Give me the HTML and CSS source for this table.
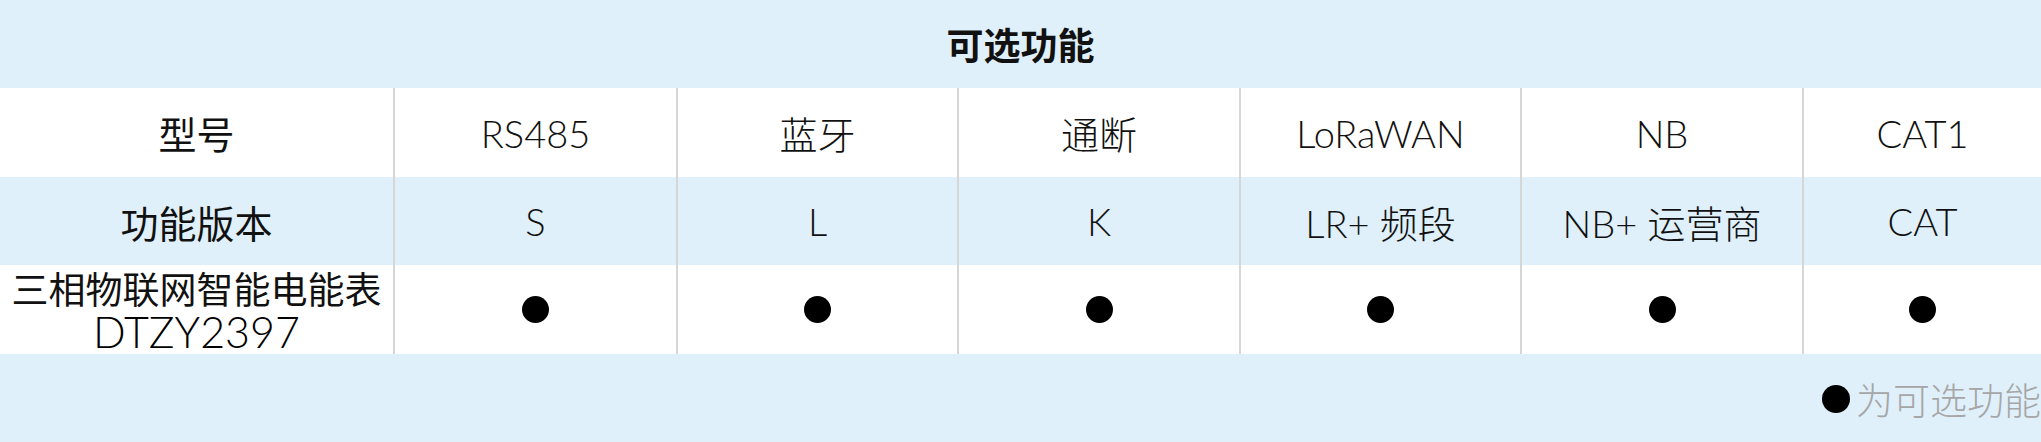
FILE: index.html
```html
<!DOCTYPE html>
<html lang="zh-CN">
<head>
<meta charset="utf-8">
<title>可选功能</title>
<link rel="stylesheet" href="styles.css">
</head>
<body>
<div class="table">
  <div class="title">可选功能</div>

  <div class="row white">
    <div class="cell first">型号</div>
    <div class="cell">RS485</div>
    <div class="cell">蓝牙</div>
    <div class="cell">通断</div>
    <div class="cell">LoRaWAN</div>
    <div class="cell">NB</div>
    <div class="cell">CAT1</div>
  </div>

  <div class="row blue">
    <div class="cell first">功能版本</div>
    <div class="cell">S</div>
    <div class="cell">L</div>
    <div class="cell">K</div>
    <div class="cell">LR+ 频段</div>
    <div class="cell">NB+ 运营商</div>
    <div class="cell">CAT</div>
  </div>

  <div class="row white">
    <div class="cell first model"><span class="name">三相物联网智能电能表</span><span class="code">DTZY2397</span></div>
    <div class="cell"><span class="dot"></span></div>
    <div class="cell"><span class="dot"></span></div>
    <div class="cell"><span class="dot"></span></div>
    <div class="cell"><span class="dot"></span></div>
    <div class="cell"><span class="dot"></span></div>
    <div class="cell"><span class="dot"></span></div>
  </div>

  <div class="note"><span class="dot note-dot"></span><span class="note-text">为可选功能</span></div>
</div>
</body>
</html>
```

FILE: styles.css
```css
html, body {
  margin: 0;
  padding: 0;
  background: #ffffff;
}

.table {
  width: 2041px;
  display: flex;
  flex-direction: column;
  font-family: "Lato", "Noto Sans CJK SC", sans-serif;
  color: #111111;
}

.title {
  height: 88px;
  background: #dff0fa;
  display: flex;
  align-items: center;
  justify-content: center;
  font-family: "Noto Sans CJK SC", sans-serif;
  font-weight: 700;
  font-size: 37px;
  color: #111111;
}

.row {
  display: grid;
  grid-template-columns: 393px 283px 281px 282px 281px 282px 239px;
  height: 88px;
}

.row.white { background: #ffffff; height: 89px; }
.row.blue { background: #dff0fa; height: 88px; }
.row.white:last-of-type { height: 88px; }

.cell {
  box-sizing: border-box;
  border-left: 2px solid #d6d6d6;
  display: flex;
  align-items: center;
  justify-content: center;
  font-size: 38px;
  font-weight: 300;
  white-space: nowrap;
}

.cell.first {
  border-left: none;
  font-family: "Noto Sans CJK SC", sans-serif;
  font-weight: 400;
  font-size: 38px;
}

.cell.model {
  flex-direction: column;
  font-size: 37px;
}

.name {
  line-height: 44px;
}

.code {
  font-family: "Lato", "Noto Sans CJK SC", sans-serif;
  font-size: 43px;
  font-weight: 300;
  line-height: 43px;
  color: #000000;
}

.dot {
  display: inline-block;
  width: 27px;
  height: 27px;
  border-radius: 50%;
  background: #000000;
}

.note {
  height: 89px;
  background: #dff0fa;
  display: flex;
  align-items: center;
  justify-content: flex-end;
  font-family: "Noto Sans CJK SC", sans-serif;
  font-weight: 300;
  font-size: 37px;
  color: #a6a6a6;
  white-space: nowrap;
}

.note-dot {
  width: 28px;
  height: 28px;
  margin-right: 6px;
}
```
